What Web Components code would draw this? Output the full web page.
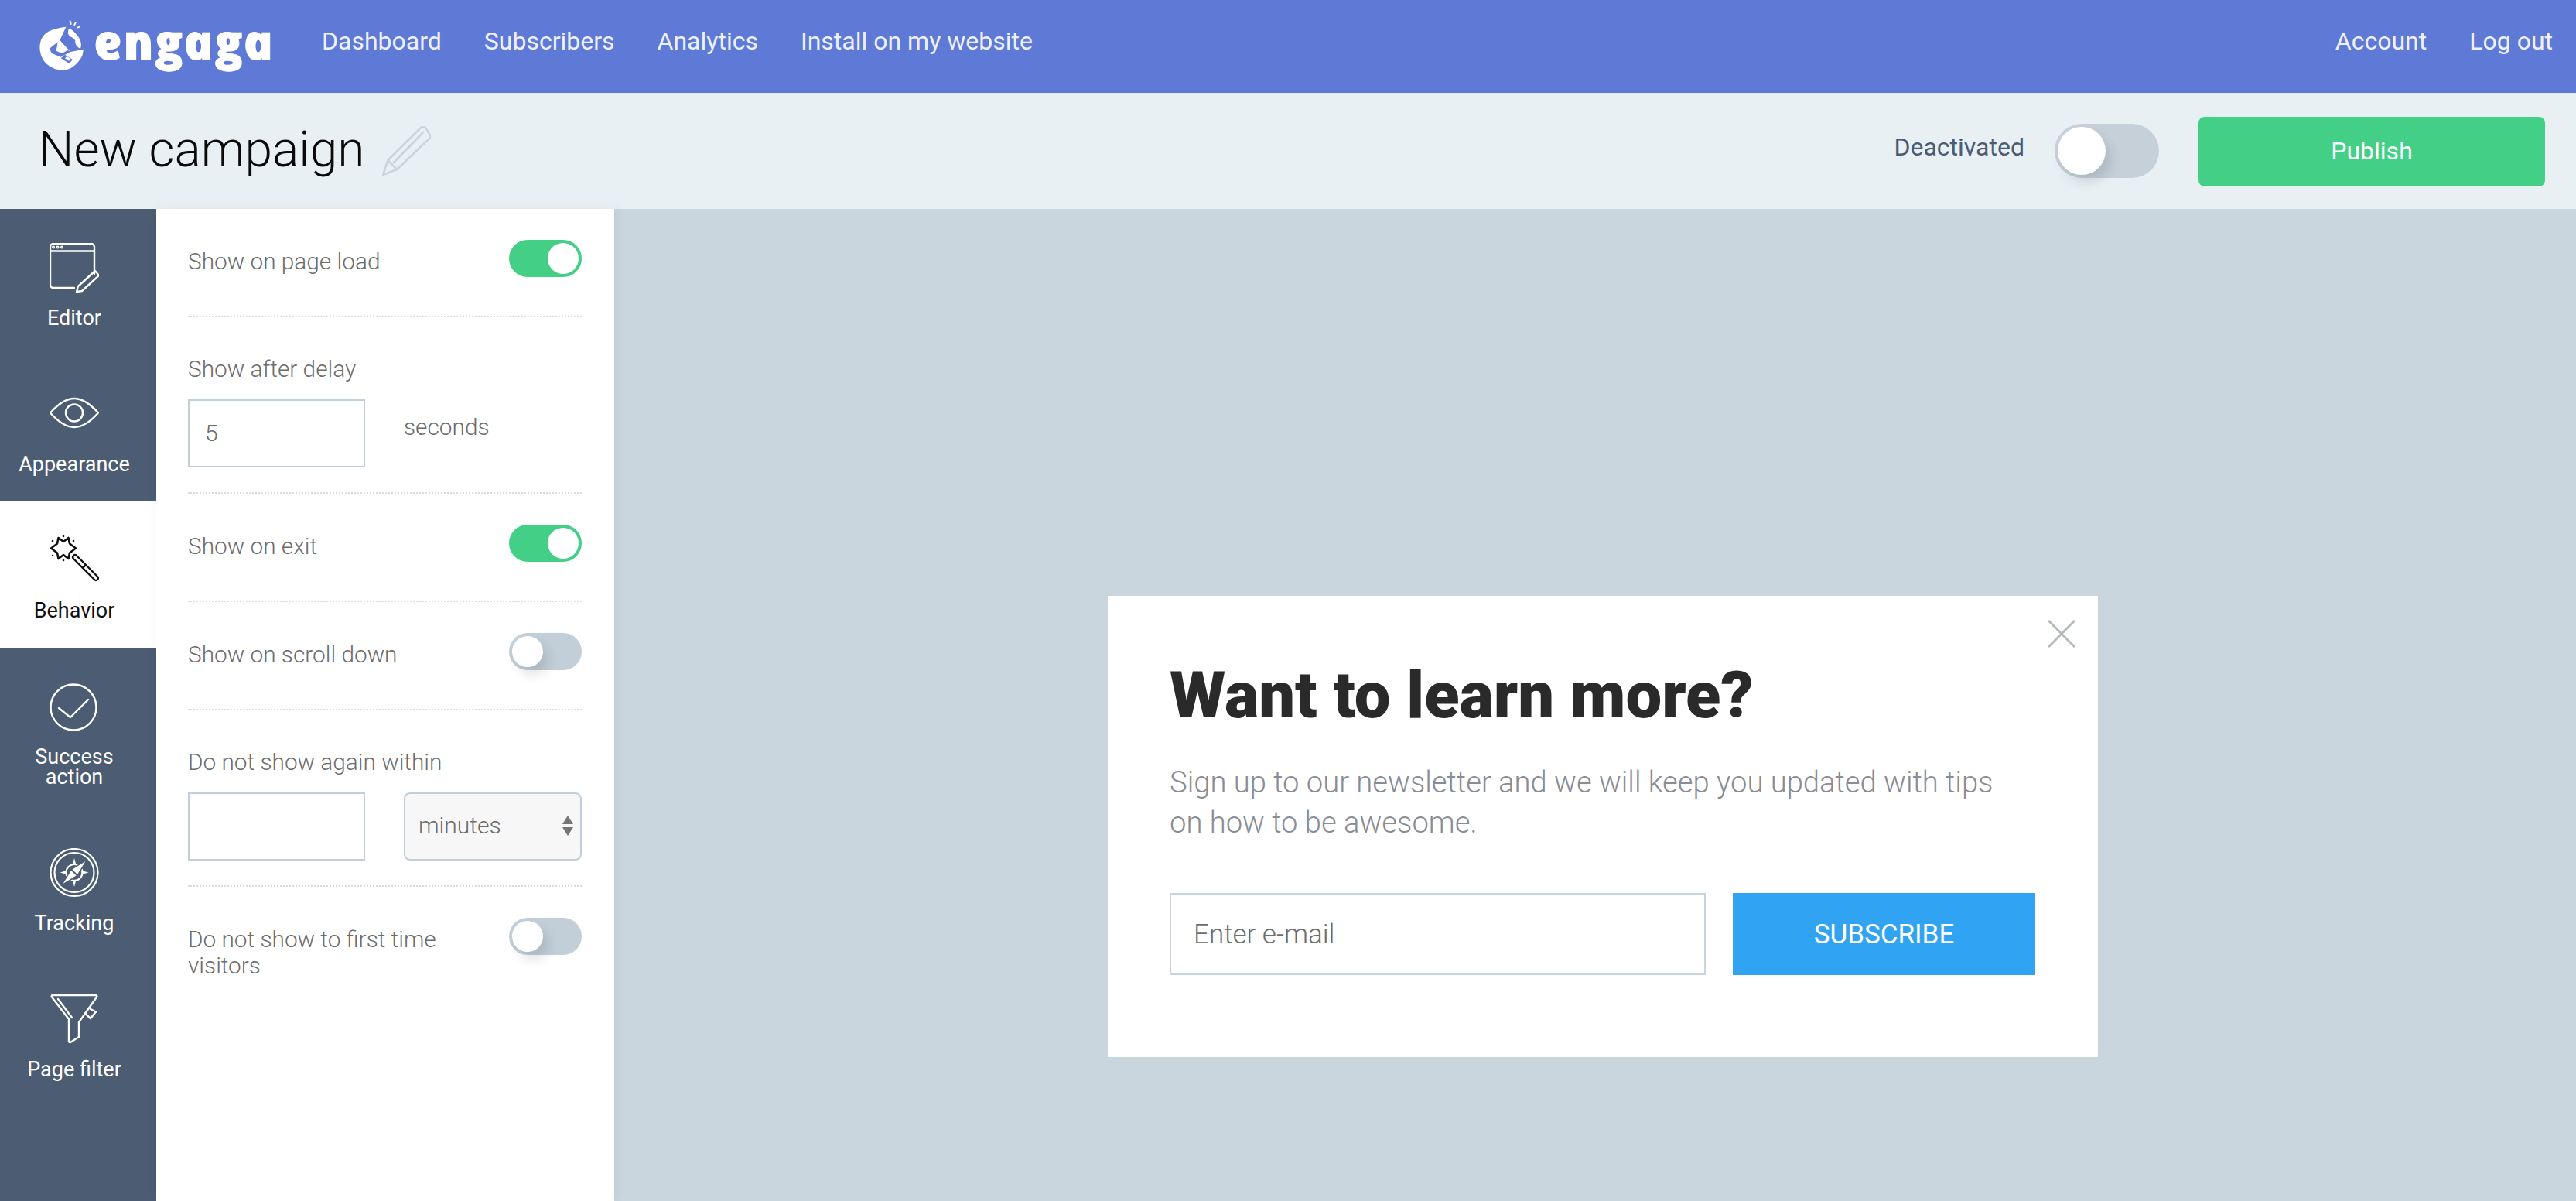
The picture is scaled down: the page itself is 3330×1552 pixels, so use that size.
<!DOCTYPE html>
<html lang="en">
<head>
<meta charset="utf-8">
<title>New campaign</title>
<style>
  html, body { margin: 0; height: 100%; }
  body { font-family: Roboto, "Liberation Sans", sans-serif; overflow: hidden; }
  svg { display: block; }
</style>
</head>
<body>
<engaga-app>
  <top-bar slot="top">
    <a slot="main">Dashboard</a>
    <a slot="main">Subscribers</a>
    <a slot="main">Analytics</a>
    <a slot="main">Install on my website</a>
    <a slot="user">Account</a>
    <a slot="user">Log out</a>
  </top-bar>
  <campaign-bar slot="sub" name="New campaign"></campaign-bar>
  <side-nav slot="nav">
    <nav-item label="Editor">
      <svg width="64" height="64" viewBox="0 0 64 64" fill="none" stroke="currentColor" stroke-width="2.4" stroke-linecap="round" stroke-linejoin="round">
        <path d="M58 40V5a4 4 0 0 0-4-4H5a4 4 0 0 0-4 4v49a4 4 0 0 0 4 4h27"/>
        <path d="M1 10.5h57"/>
        <path d="M35 63l2-7 22-20 5 6-22 20z"/>
        <circle cx="5" cy="5.5" r=".8"/><circle cx="10.5" cy="5.5" r=".8"/><circle cx="16" cy="5.5" r=".8"/>
      </svg>
    </nav-item>
    <nav-item label="Appearance">
      <svg width="64" height="64" viewBox="0 0 64 64" fill="none" stroke="currentColor" stroke-width="2.4" stroke-linejoin="round">
        <path d="M1 30.5C13 17 23 12 32 12s19 5 31 18.5C51 44 41 49 32 49S13 44 1 30.5z"/>
        <circle cx="32" cy="30.5" r="11"/>
      </svg>
    </nav-item>
    <nav-item label="Behavior" active>
      <svg width="64" height="64" viewBox="0 0 64 64" fill="none" stroke="currentColor" stroke-linejoin="round" stroke-linecap="round">
        <path stroke-width="2.6" d="M18 8l6.500-5 1.500 7.500 8 6-8 6-1.500 7.500-6.500-5-6.500 5L10 22.500l-8-6 8-6 1.500-7.500z"/>
        <g fill="currentColor" stroke="none">
          <circle cx="4" cy="7" r="1.300"/><circle cx="18" cy="1" r="1.300"/><circle cx="31" cy="7" r="1.300"/>
          <circle cx="4" cy="26" r="1.300"/><circle cx="18" cy="32" r="1.300"/>
        </g>
        <path stroke-width="8" d="M33 28l27 27"/>
        <path stroke="#fff" stroke-width="3.200" d="M33 28l27 27"/>
        <path stroke-width="2.400" d="M46 39l-3 3"/>
      </svg>
    </nav-item>
    <nav-item label="Success action">
      <svg width="64" height="64" viewBox="0 0 64 64" fill="none" stroke="currentColor" stroke-width="2.4" stroke-linecap="round" stroke-linejoin="round">
        <circle cx="31" cy="33" r="29.500"/>
        <path d="M12 34l15 12 23-23"/>
      </svg>
    </nav-item>
    <nav-item label="Tracking">
      <svg width="64" height="64" viewBox="0 0 64 64" fill="none" stroke="currentColor" stroke-width="2.200">
        <circle cx="32" cy="31.500" r="30.500"/>
        <circle cx="32" cy="31.500" r="25.500"/>
        <circle cx="32" cy="31.500" r="10.500"/>
        <path fill="currentColor" stroke="none" d="M32 13l2.500 9h-5zM32 50l2.500-9h-5zM13.500 31.500l9-2.500v5zM50.500 31.500l-9-2.500v5z"/>
        <path fill="currentColor" stroke="#4c5c72" stroke-width="1.500" d="M49 14.500L36 35.500 15 48.500 28 27.500z"/>
        <path stroke="#4c5c72" stroke-width="2" d="M28 27.500l8 8"/>
      </svg>
    </nav-item>
    <nav-item label="Page filter">
      <svg width="64" height="64" viewBox="0 0 64 64" fill="none" stroke="currentColor" stroke-width="2.400" stroke-linecap="round" stroke-linejoin="round">
        <path d="M4 1h56a1.500 1.500 0 0 1 1 2.500L38 36v19l-11 7a1.500 1.500 0 0 1-2-1V32L3 3.500A1.500 1.500 0 0 1 4 1z"/>
        <path d="M11 6l18 24"/>
        <path d="M53 19l7 3.500-7 8.500-7-6.500"/>
      </svg>
    </nav-item>
  </side-nav>
  <settings-panel slot="panel">
    <setting-toggle on>Show on page load</setting-toggle>
    <setting-field label="Show after delay">
      <text-box value="5"></text-box>
      <span class="unit" slot="after">seconds</span>
    </setting-field>
    <setting-toggle on>Show on exit</setting-toggle>
    <setting-toggle>Show on scroll down</setting-toggle>
    <setting-field label="Do not show again within">
      <text-box></text-box>
      <select-box slot="after">minutes</select-box>
    </setting-field>
    <setting-toggle last>Do not show to first time visitors</setting-toggle>
  </settings-panel>
  <popup-card slot="canvas">
    <span slot="title">Want to learn more?</span>
    <span slot="text">Sign up to our newsletter and we will keep you updated with tips on how to be awesome.</span>
    <span slot="placeholder">Enter e-mail</span>
    <span slot="action">SUBSCRIBE</span>
  </popup-card>
</engaga-app>

<script>
function define(name, html, extra) {
  class Comp extends HTMLElement {
    constructor() {
      super();
      this.attachShadow({ mode: 'open' }).innerHTML = html;
    }
    connectedCallback() {
      if (extra) extra(this, this.shadowRoot);
    }
  }
  customElements.define(name, Comp);
}

define('engaga-app', `
  <style>
    :host { display: grid; grid-template: 120px 150px 1fr / 202px 592px 1fr; height: 1552px; width: 3330px; }
    .top { grid-column: 1 / 4; }
    .sub { grid-column: 1 / 4; }
    .canvas { background: #c9d6de; overflow: hidden; }
    .panel { position: relative; box-shadow: 3px 0 14px rgba(40, 60, 80, .06); }
  </style>
  <div class="top"><slot name="top"></slot></div>
  <div class="sub"><slot name="sub"></slot></div>
  <div><slot name="nav"></slot></div>
  <div class="panel"><slot name="panel"></slot></div>
  <div class="canvas"><slot name="canvas"></slot></div>
`);

define('top-bar', `
  <style>
    :host { display: flex; align-items: center; justify-content: space-between; height: 120px; padding: 0 30px 15px 48px; box-sizing: border-box;
      background: #5e79d6; color: #eef1fb; font: 400 32px/40px Roboto, sans-serif; }
    .left, .main, .user { display: flex; align-items: center; }
    .main { gap: 55px; margin-left: 48px; }
    .user { gap: 55px; }
    .logo { display: flex; align-items: flex-start; width: 320px; height: 76px; margin-top: 15px; }
    .word { display: block; width: 240px; margin-left: 6px; color: #fff; font: italic 800 63px/62px "Open Sans", sans-serif; transform: skewX(12deg); letter-spacing: 1.5px; -webkit-text-stroke: 1px #fff; }
  </style>
  <div class="left">
    <div class="logo">
      <svg width="66" height="74" viewBox="0 0 198 222">
        <path fill="#fff" d="M112 38C80 42 45 50 28 68 12 85 8 110 12 135c6 35 33 63 73 70 35 7 70-15 90-55l5-25-50 10-42-45z"/>
        <path fill="#5e79d6" d="M80 97L48 122l8 18 36 15 40-22-14-4-22 12-22-10z"/>
        <path fill="#5e79d6" d="M108 146l30 19-14 15-32-20z"/>
        <path fill="#fff" d="M116 152l14 10-7 8-15-10z"/>
        <path fill="#fff" d="M124 44c-6 10-6 24 4 32 10 4 18 8 20 16-2 10 4 24 20 30 6-14 2-34-12-50-8-12-20-24-32-28z"/>
        <path stroke="#fff" stroke-width="6" stroke-linecap="round" d="M128 16l3 11M149 22l-4 8M165 38l-9 3"/>
      </svg>
      <span class="word">engaga</span>
    </div>
    <nav class="main"><slot name="main"></slot></nav>
  </div>
  <nav class="user"><slot name="user"></slot></nav>
`);

define('campaign-bar', `
  <style>
    :host { display: flex; align-items: center; justify-content: space-between; height: 150px; padding: 0 40px 0 50px; box-sizing: border-box; background: #e8f0f4; }
    .name { display: flex; align-items: center; gap: 23px; }
    h1 { margin: -3px 0 0; font: 300 64px/76px Roboto, sans-serif; color: #0a0a0a; }
    .state { display: flex; align-items: center; }
    .label { font: 400 32px/40px Roboto, sans-serif; color: #4b5c72; margin: -10px 39px 0 0; }
    .publish { width: 448px; height: 90px; margin: 2px 0 0 51px; border-radius: 8px; background: #43d086; color: #fff; font: 400 32px/88px Roboto, sans-serif; text-align: center; }
  </style>
  <div class="name">
    <h1></h1>
    <svg width="64" height="64" viewBox="0 0 64 64" fill="none" stroke="#c8d5de" stroke-width="2.600" stroke-linejoin="round" stroke-linecap="round">
      <path d="M1 63l6.500-19L50 2c2-2 4-2 6 0l5 8c1.500 2 1.500 4 0 6L19 56z"/>
      <path d="M7.500 44L19 56M15 47L53 8"/>
    </svg>
  </div>
  <div class="state">
    <span class="label">Deactivated</span>
    <toggle-switch large></toggle-switch>
    <div class="publish">Publish</div>
  </div>
`, (el, root) => { root.querySelector('h1').textContent = el.getAttribute('name'); });

define('toggle-switch', `
  <style>
    :host { display: block; flex: none; position: relative; width: var(--w, 94px); height: var(--h, 48px); border-radius: 35px; background: #c2cfd8; }
    :host([large]) { --w: 135px; --h: 70px; --k: 62px; background: #c5d0d8; }
    :host([on]) { background: #43d086; }
    .knob { position: absolute; top: 4px; left: 4px; width: var(--k, 40px); height: var(--k, 40px); border-radius: 50%; background: #fff; box-shadow: 7px 10px 14px rgba(50, 60, 70, .14); }
    :host([on]) .knob { left: auto; right: 4px; box-shadow: none; }
  </style>
  <div class="knob"></div>
`);

define('side-nav', `
  <style>
    :host { display: block; height: 100%; background: #4c5c72; }
  </style>
  <slot></slot>
`);

define('nav-item', `
  <style>
    :host { display: flex; flex-direction: column; align-items: center; padding: 44px 10px 35px 0; background: #4c5c72; color: #fff; }
    :host([active]) { background: #fff; color: #111; }
    .label { width: 150px; margin-top: 20px; font: 400 27px/26px Roboto, sans-serif; text-align: center; }
  </style>
  <slot></slot>
  <div class="label"></div>
`, (el, root) => { root.querySelector('.label').textContent = el.getAttribute('label'); });

define('settings-panel', `
  <style>
    :host { display: block; height: 100%; padding: 0 42px 0 41px; box-sizing: border-box; background: #fff; }
  </style>
  <slot></slot>
`);

define('setting-toggle', `
  <style>
    :host { display: flex; justify-content: space-between; align-items: flex-start; height: 140px; padding-top: 40px; box-sizing: border-box; border-bottom: 2px dotted #dcdcdc; color: #6c6c6c; font: 300 29.800px/34px Roboto, sans-serif; }
    :host([last]) { border-bottom: 0; }
    .text { width: 380px; margin-top: 11px; }
  </style>
  <div class="text"><slot></slot></div>
  <toggle-switch></toggle-switch>
`, (el, root) => { if (el.hasAttribute('on')) root.querySelector('toggle-switch').setAttribute('on', ''); });

define('setting-field', `
  <style>
    :host { display: block; height: 228px; padding-top: 50px; box-sizing: border-box; border-bottom: 2px dotted #dcdcdc; color: #6c6c6c; font: 300 29.800px/34px Roboto, sans-serif; }
    .row { display: grid; grid-template-columns: 229px 230px; justify-content: space-between; margin-top: 22px; }
    ::slotted(.unit) { padding: 19px 0 0 0; }
  </style>
  <div class="label"></div>
  <div class="row"><slot></slot><slot name="after"></slot></div>
`, (el, root) => { root.querySelector('.label').textContent = el.getAttribute('label'); });

define('text-box', `
  <style>
    :host { display: block; height: 88px; padding: 0 20px; box-sizing: border-box; border: 2px solid #c0cfda; background: #fff; font: 300 30px/84px Roboto, sans-serif; color: #6c6c6c; }
  </style>
  <span></span>
`, (el, root) => { root.querySelector('span').textContent = el.getAttribute('value') || ''; });

define('select-box', `
  <style>
    :host { display: flex; align-items: center; justify-content: space-between; height: 88px; padding: 0 9px 0 17px; box-sizing: border-box; border: 2px solid #c0cfda; border-radius: 8px; background: #f7f7f7; color: #6c6c6c; font: 300 30px/34px Roboto, sans-serif; }
    .text { margin-top: -3px; }
  </style>
  <div class="text"><slot></slot></div>
  <svg width="14" height="28" viewBox="0 0 14 28" fill="#757575"><path d="M7 0l7 11H0zM0 15h14L7 26z"/></svg>
`);

define('popup-card', `
  <style>
    :host { display: block; position: relative; width: 1280px; height: 596px; margin: 500px 0 0 638px; padding: 82px 80px 0 80px; box-sizing: border-box; background: #fff; }
    h2 { margin: 0; font: 900 83.200px/94px Roboto, sans-serif; color: #2a2a2a; }
    p { width: 1100px; margin: 39px 0 0; font: 300 38.200px/52px Roboto, sans-serif; color: #8a8c94; }
    .form { display: flex; gap: 35px; margin-top: 65px; }
    .input { flex: none; width: 693px; height: 106px; padding: 0 29px; box-sizing: border-box; border: 2px solid #c8d5de; font: 300 35px/104px Roboto, sans-serif; color: #6c6c6c; }
    .btn { flex: none; width: 391px; height: 106px; background: #30a3f2; color: #fff; font: 400 35px/108px Roboto, sans-serif; text-align: center; }
    svg { position: absolute; top: 31px; right: 29px; }
  </style>
  <svg width="36" height="36" viewBox="0 0 36 36" stroke="#b5bbc0" stroke-width="3"><path d="M1 1l34 34M35 1L1 35"/></svg>
  <h2><slot name="title"></slot></h2>
  <p><slot name="text"></slot></p>
  <div class="form">
    <div class="input"><slot name="placeholder"></slot></div>
    <div class="btn"><slot name="action"></slot></div>
  </div>
`);
</script>
</body>
</html>
